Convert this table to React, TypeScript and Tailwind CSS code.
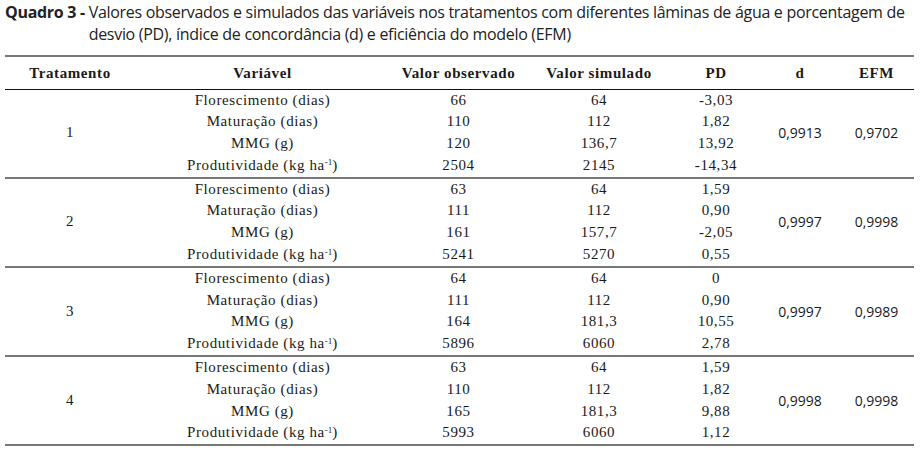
import React from "react";

type Row = { v: React.ReactNode; obs: string; sim: string; pd: string };
type Group = { t: string; d: string; efm: string; rows: Row[] };

const prod = (
  <>
    Produtividade (kg ha<sup className="text-[9px] tracking-normal">-1</sup>)
  </>
);

const mk = (a: string[], b: string[], c: string[]): Row[] => [
  { v: "Florescimento (dias)", obs: a[0], sim: b[0], pd: c[0] },
  { v: "Maturação (dias)", obs: a[1], sim: b[1], pd: c[1] },
  { v: "MMG (g)", obs: a[2], sim: b[2], pd: c[2] },
  { v: prod, obs: a[3], sim: b[3], pd: c[3] },
];

const groups: Group[] = [
  { t: "1", d: "0,9913", efm: "0,9702", rows: mk(["66", "110", "120", "2504"], ["64", "112", "136,7", "2145"], ["-3,03", "1,82", "13,92", "-14,34"]) },
  { t: "2", d: "0,9997", efm: "0,9998", rows: mk(["63", "111", "161", "5241"], ["64", "112", "157,7", "5270"], ["1,59", "0,90", "-2,05", "0,55"]) },
  { t: "3", d: "0,9997", efm: "0,9989", rows: mk(["64", "111", "164", "5896"], ["64", "112", "181,3", "6060"], ["0", "0,90", "10,55", "2,78"]) },
  { t: "4", d: "0,9998", efm: "0,9998", rows: mk(["63", "110", "165", "5993"], ["64", "112", "181,3", "6060"], ["1,59", "1,82", "9,88", "1,12"]) },
];

const serif = "font-['Liberation_Serif',serif]";
const sans = "font-['Open_Sans',sans-serif]";

export default function App() {
  return (
    <div className="w-[921px] h-[450px] bg-white overflow-hidden text-[#222]">
      <div className={`${sans} text-[16px] leading-[22px] pl-[5px] pr-[4px] pt-[1px] grid grid-cols-[auto_1fr] tracking-[-0.3px]`}>
        <span className="font-bold whitespace-pre">Quadro 3 - </span>
        <span>
          Valores observados e simulados das variáveis nos tratamentos com diferentes lâminas de água e porcentagem de desvio (PD), índice de concordância (d) e eficiência do modelo (EFM)
        </span>
      </div>
      <table className={`${serif} mt-[10px] ml-[5px] w-[909px] border-collapse table-fixed text-[15px] tracking-[0.6px] text-[#1a1a1a]`}>
        <colgroup>
          <col className="w-[130px]" />
          <col className="w-[255px]" />
          <col className="w-[137px]" />
          <col className="w-[144px]" />
          <col className="w-[90px]" />
          <col className="w-[78px]" />
          <col className="w-[75px]" />
        </colgroup>
        <thead>
          <tr className="h-[33px] border-t-2 border-t-[#777] border-b border-b-[#111]">
            <th className="text-center font-bold">Tratamento</th>
            <th className="text-center font-bold">Variável</th>
            <th className="text-center font-bold">Valor observado</th>
            <th className="text-center font-bold">Valor simulado</th>
            <th className="text-center font-bold">PD</th>
            <th className="text-center font-bold">d</th>
            <th className="text-center font-bold">EFM</th>
          </tr>
        </thead>
        {groups.map((g) => (
          <tbody key={g.t} className="border-b-2 border-b-[#777]">
            {g.rows.map((r, i) => (
              <tr key={i} className="h-[21.8px] leading-[21.8px]">
                {i === 0 && (
                  <td rowSpan={4} className="text-center align-middle">
                    {g.t}
                  </td>
                )}
                <td className="text-center p-0">{r.v}</td>
                <td className="text-center p-0">{r.obs}</td>
                <td className="text-center p-0">{r.sim}</td>
                <td className="text-center p-0">{r.pd}</td>
                {i === 0 && (
                  <>
                    <td rowSpan={4} className={`${sans} text-[14px] tracking-normal text-center align-middle`}>
                      {g.d}
                    </td>
                    <td rowSpan={4} className={`${sans} text-[14px] tracking-normal text-center align-middle`}>
                      {g.efm}
                    </td>
                  </>
                )}
              </tr>
            ))}
          </tbody>
        ))}
      </table>
    </div>
  );
}
